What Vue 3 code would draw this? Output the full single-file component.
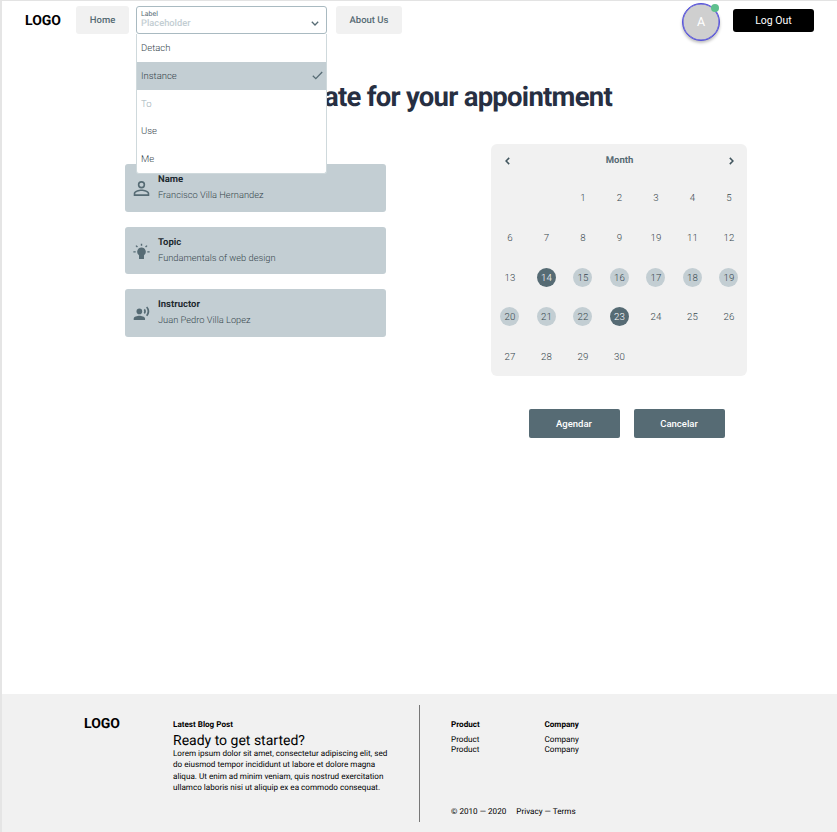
<script setup>
const options = [
  { label: 'Detach' },
  { label: 'Instance', selected: true },
  { label: 'To', disabled: true },
  { label: 'Use' },
  { label: 'Me' },
]
const details = [
  { title: 'Name', text: 'Francisco Villa Hernandez', icon: 'person' },
  { title: 'Topic', text: 'Fundamentals of web design', icon: 'bulb' },
  { title: 'Instructor', text: 'Juan Pedro Villa Lopez', icon: 'voice' },
]
const labels = ['', '', 1, 2, 3, 4, 5, 6, 7, 8, 9, 19, 11, 12, 13, 14, 15, 16, 17, 18, 19, 20, 21, 22, 23, 24, 25, 26, 27, 28, 29, 30]
const days = labels.map((label, i) => ({
  label,
  edge: i === 15 || i === 24,
  range: i > 15 && i < 24,
}))
</script>

<template>
  <div class="page">
    <header class="header">
      <div class="logo">LOGO</div>
      <a class="nav home">Home</a>
      <div class="select">
        <div class="field">
          <span class="field-label">Label</span>
          <span class="placeholder">Placeholder</span>
          <svg class="caret" viewBox="0 0 8 5"><path d="M.8.8 4 4 7.2.8" /></svg>
        </div>
        <ul class="menu">
          <li v-for="o in options" :key="o.label" :class="{ selected: o.selected, disabled: o.disabled }">
            <span>{{ o.label }}</span>
            <svg v-if="o.selected" class="check" viewBox="0 0 11 9"><path d="M.8 4.8 3.8 7.7 10.2 1" /></svg>
          </li>
        </ul>
      </div>
      <a class="nav about">About Us</a>
      <div class="avatar">A<span class="status"></span></div>
      <button class="logout">Log Out</button>
    </header>

    <h1 class="title">Select date for your appointment</h1>

    <main class="main">
      <section class="cards">
        <article v-for="d in details" :key="d.title" class="card">
          <svg class="icon" :class="d.icon" viewBox="0 0 24 24">
            <path v-if="d.icon === 'person'" fill-rule="evenodd" d="M12 1.5a5.2 5.2 0 1 0 0 10.400a5.200 5.200 0 0 0 0-10.400zm0 2.300a2.900 2.900 0 1 1 0 5.800a2.900 2.900 0 0 1 0-5.800zM12 13.300c-3.800 0-11 1.900-11 5.700v3.500h22V19c0-3.800-7.200-5.700-11-5.700zm0 2.300c3.700 0 8.700 1.800 8.700 3.400v1.200H3.300V19c0-1.600 5-3.400 8.700-3.400z" />
            <g v-else-if="d.icon === 'bulb'">
              <path d="M12 6.500a6 6 0 0 0-3.500 10.900V22.500h7v-5.100A6 6 0 0 0 12 6.500z" />
              <path d="M11 1h2v3h-2zM.5 11.500h3.300v2H.5zM20.200 11.500h3.300v2h-3.300zM3.500 4.400l1.400-1.400 2.100 2.100-1.400 1.400zM17 5.100 19.100 3l1.400 1.400-2.100 2.100z" />
            </g>
            <g v-else>
              <circle cx="9" cy="9" r="4" />
              <path d="M9 15c-2.670 0-8 1.340-8 4v2h16v-2c0-2.660-5.330-4-8-4zM16.760 5.360l-1.680 1.690c.84 1.180.84 2.710 0 3.890l1.680 1.690c2.020-2.020 2.020-5.070 0-7.270zM20.070 2l-1.630 1.630c2.770 3.020 2.770 7.560 0 10.740L20.070 16c3.900-3.890 3.910-9.950 0-14z" />
            </g>
          </svg>
          <div class="card-text">
            <h2>{{ d.title }}</h2>
            <p>{{ d.text }}</p>
          </div>
        </article>
      </section>

      <section class="booking">
        <div class="calendar">
          <div class="month">
            <svg viewBox="0 0 5 8"><path d="M4.200.9 1.100 4l3.100 3.100" /></svg>
            <span>Month</span>
            <svg viewBox="0 0 5 8"><path d="M.8.9 3.900 4 .8 7.100" /></svg>
          </div>
          <div class="grid">
            <div v-for="(d, i) in days" :key="i" class="cell">
              <span class="day" :class="{ edge: d.edge, range: d.range }">{{ d.label }}</span>
            </div>
          </div>
        </div>
        <div class="actions">
          <button>Agendar</button>
          <button>Cancelar</button>
        </div>
      </section>
    </main>

    <footer class="footer">
      <div class="logo">LOGO</div>
      <section class="post">
        <h3>Latest Blog Post</h3>
        <h4>Ready to get started?</h4>
        <p>Lorem ipsum dolor sit amet, consectetur adipiscing elit, sed<br />do eiusmod tempor incididunt ut labore et dolore magna<br />aliqua. Ut enim ad minim veniam, quis nostrud exercitation<br />ullamco laboris nisi ut aliquip ex ea commodo consequat.</p>
      </section>
      <section class="links">
        <div class="columns">
          <div><h3>Product</h3><a>Product</a><a>Product</a></div>
          <div><h3>Company</h3><a>Company</a><a>Company</a></div>
        </div>
        <div class="legal"><span>© 2010 — 2020</span><span>Privacy — Terms</span></div>
      </section>
    </footer>
  </div>
</template>

<style>
body { margin: 0; background: #fff; }
</style>

<style scoped>
* { box-sizing: border-box; margin: 0; padding: 0; }
.page {
  width: 837px; height: 832px; overflow: hidden;
  display: flex; flex-direction: column;
  border-left: 2px solid #e5e5e5; border-top: 1px solid #e3e3e3;
  font-family: Roboto, "Liberation Sans", sans-serif;
  font-size: 9.5px; color: #566b74;
  text-rendering: geometricPrecision;
}
button { border: 0; font-family: inherit; }
.logo { font-size: 14px; line-height: 16px; font-weight: 700; color: #000; }
.header { display: flex; align-items: flex-start; height: 70px; padding: 5px 23px 0 23px; }
.header .logo { width: 51px; padding-top: 7px; }
.nav {
  height: 28px; line-height: 29px; border-radius: 3px; background: #f1f1f1;
  text-align: center; font-weight: 500; font-size: 9.500px;
}
.home { width: 53px; margin-right: 7px; }
.about { width: 66px; margin-left: 9px; }
.select { position: relative; width: 191px; }
.field {
  display: flex; flex-direction: column; position: relative;
  height: 28px; padding: 3px 4px; border: 1px solid #a9bac1; border-radius: 3px; background: #fff;
}
.field-label { font-size: 7px; line-height: 8px; }
.placeholder { font-size: 9.300px; line-height: 12px; color: #c3ced3; font-weight: 500; }
.caret { position: absolute; right: 7px; top: 14px; width: 8px; height: 5px; }
.caret path, .check path, .month path { fill: none; stroke: #566b74; stroke-width: 1.300; }
.menu {
  position: absolute; z-index: 2; top: 28px; left: 0; width: 191px; list-style: none;
  border: 1px solid #cfd9dc; border-top: 0; border-radius: 0 0 3px 3px; background: #fff;
}
.menu li {
  display: flex; align-items: center; justify-content: space-between;
  height: 27.800px; padding: 0 3px 0 4px; line-height: 14px; font-weight: 300; color: #36464d;
}
.menu span { padding-top: 2.400px; }
.menu .selected { background: #c3ced3; }
.menu .disabled { color: #9aadb5; }
.check { width: 11px; height: 9px; }
.avatar {
  position: relative; width: 38px; height: 38px; margin: -3px 13px 0 auto;
  border: 1.500px solid #5551dc; border-radius: 50%; background: #cfcfcf;
  box-shadow: 0 2px 3px rgba(0, 0, 0, .25), inset 0 0 0 .5px #5551dc;
  color: #fff; font-size: 12.500px; line-height: 38px; text-align: center;
}
.status { position: absolute; right: 0; top: 0; width: 8px; height: 8px; border-radius: 50%; background: #5fc08e; }
.logout { width: 81px; height: 23px; margin-top: 3px; border-radius: 3px; background: #000; color: #fff; font-size: 10.500px; }
.title {
  width: 610px; height: 73px; text-align: right; color: #272f42;
  font-size: 27.500px; line-height: 51px; font-weight: 700; letter-spacing: -.75px;
}
.main { display: flex; justify-content: space-between; align-items: flex-start; padding: 0 90px 0 123px; flex: 1; }
.cards { display: grid; gap: 15px; width: 260.500px; margin-top: 20px; }
.card { display: flex; align-items: center; gap: 8px; height: 47.700px; padding-left: 8px; border-radius: 3px; background: #c3ced3; }
.icon { width: 17px; height: 17px; fill: #566b74; }
.person, .bulb { margin-top: 2px; }
.card h2 { color: #1f2b31; font-size: 9.500px; line-height: 12px; font-weight: 700; }
.card p { margin-top: 4px; font-size: 9.300px; line-height: 12px; font-weight: 300; color: #36464d; }
.booking { width: 256px; }
.calendar { height: 231.500px; border-radius: 6px; background: #f1f1f1; }
.month { display: flex; align-items: center; justify-content: space-between; height: 34px; padding: 0 13px 0 14px; font-size: 9.500px; line-height: 12px; font-weight: 700; }
.month svg { width: 5px; height: 8px; }
.month path { stroke-width: 1.500; stroke: #42565f; }
.grid { display: grid; grid-template-columns: repeat(7, 36.500px); grid-auto-rows: 39.700px; padding-left: .7px; }
.cell { display: flex; align-items: center; justify-content: center; }
.day { width: 19px; height: 19px; border-radius: 50%; line-height: 21px; text-align: center; font-weight: 300; font-size: 9.700px; color: #36464d; }
.range { background: #c3ced3; }
.edge { background: #566b74; color: #fff; }
.actions { display: flex; gap: 14px; margin: 33.500px 0 0 37.500px; }
.actions button { width: 91px; height: 28.500px; border-radius: 2px; background: #566b74; color: #fff; font-size: 9.500px; font-weight: 500; }
.footer { display: flex; height: 138px; padding: 11px 0 10px 82px; background: #f1f1f1; color: #000; font-size: 8.150px; }
.footer .logo { width: 89px; padding-top: 11px; }
.post { width: 247px; padding-top: 13px; border-right: 1px solid #777; }
h3 { font-size: 8.100px; line-height: 12px; font-weight: 700; }
h4 { margin-top: 3px; font-size: 14px; line-height: 16px; font-weight: 400; }
.post p { margin-top: -1px; font-size: 8.120px; line-height: 11.400px; white-space: nowrap; }
.links { display: flex; flex-direction: column; justify-content: space-between; padding: 13px 0 5px 31px; }
.columns { display: grid; grid-template-columns: 93.500px 93.500px; }
.columns h3 { margin-bottom: 4px; }
.columns a { display: block; line-height: 10.300px; }
.legal { display: flex; gap: 10px; line-height: 12px; }
</style>
